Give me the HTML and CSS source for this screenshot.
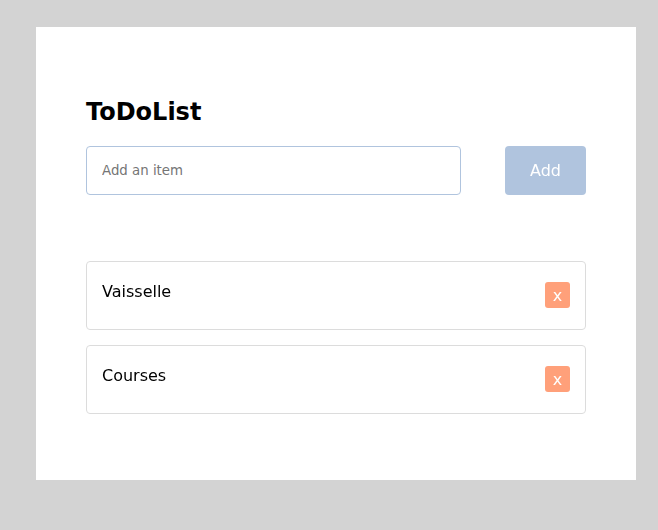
FILE: index.html
```html
<!DOCTYPE html>
<html lang="fr">
<head>
<meta charset="utf-8">
<title>ToDoList</title>
<link rel="stylesheet" href="styles.css">
</head>
<body>
<main class="card">
  <h1 class="title">ToDoList</h1>
  <form class="add-form">
    <input class="add-input" type="text" placeholder="Add an item" autofocus>
    <button class="add-btn" type="button">Add</button>
  </form>
  <ul class="list">
    <li class="item"><span class="item-text">Vaisselle</span><button class="del-btn" type="button">x</button></li>
    <li class="item"><span class="item-text">Courses</span><button class="del-btn" type="button">x</button></li>
  </ul>
</main>
</body>
</html>
```
FILE: styles.css
```css
html, body {
  margin: 0;
  padding: 0;
}
body {
  background: #d3d3d3;
  font-family: "DejaVu Sans", Verdana, sans-serif;
  padding: 27px 0 0 36px;
  height: 530px;
  box-sizing: border-box;
}
.card {
  width: 600px;
  box-sizing: border-box;
  background: #fff;
  padding: 50px;
}
.title {
  margin: 21px 0 20px;
  font-size: 24px;
  line-height: 28px;
  font-weight: bold;
  color: #000;
}
.add-form {
  display: flex;
  justify-content: space-between;
  height: 49px;
  margin: 0;
}
.add-input {
  width: 375px;
  box-sizing: border-box;
  height: 49px;
  border: 1px solid #b0c4de;
  border-radius: 4px;
  padding: 0 15px;
  font-family: "DejaVu Sans", sans-serif;
  font-size: 13.333px;
  color: #000;
  outline: none;
}
.add-input::placeholder {
  color: #757575;
}
.add-btn {
  width: 81px;
  height: 49px;
  border: none;
  border-radius: 4px;
  background: #b0c4de;
  color: #fff;
  font-family: "DejaVu Sans", sans-serif;
  font-size: 16px;
  padding: 0;
}
.list {
  list-style: none;
  margin: 66px 0 0;
  padding: 0;
  display: flex;
  flex-direction: column;
  gap: 15px;
}
.item {
  display: flex;
  justify-content: space-between;
  align-items: flex-start;
  border: 1px solid #dcdcdc;
  border-radius: 4px;
  padding: 20px 15px 20px;
  min-height: 27px;
}
.item:last-child {
  margin-bottom: 16px;
}
.item-text {
  font-size: 16px;
  line-height: 19px;
  color: #000;
}
.del-btn {
  width: 25px;
  height: 26px;
  border: none;
  border-radius: 3px;
  background: #ffa07a;
  color: #fff;
  font-family: "DejaVu Sans", sans-serif;
  font-size: 16px;
  line-height: 27px;
  padding: 0;
}
```
